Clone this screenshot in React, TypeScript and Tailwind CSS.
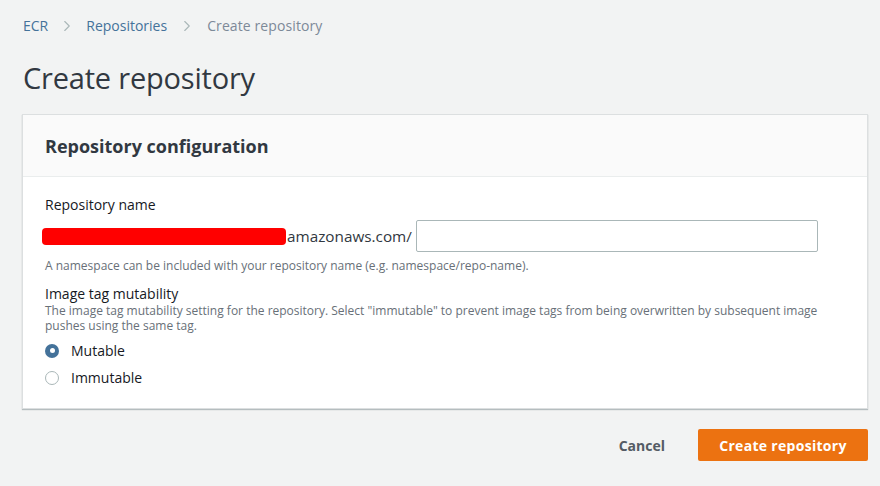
import { ChevronRight } from 'lucide-react'

const font = { fontFamily: '"Open Sans", "Noto Sans", Arial, sans-serif' }

export default function App() {
  return (
    <div className="w-[880px] h-[486px] bg-[#f2f3f3] text-[#16191f] overflow-hidden" style={font}>
      {/* Breadcrumbs */}
      <div className="flex items-center pl-[23px] pt-[14px] h-[24px] text-[14px] leading-[20px] box-content">
        <span className="text-[#44729a]">ECR</span>
        <ChevronRight className="w-[18px] h-[18px] mx-[10px] text-[#aab7b8]" strokeWidth={1.5} />
        <span className="text-[#44729a]">Repositories</span>
        <ChevronRight className="w-[18px] h-[18px] mx-[11px] text-[#aab7b8]" strokeWidth={1.5} />
        <span className="text-[#7d8998] tracking-[0.1px]">Create repository</span>
      </div>

      {/* Title */}
      <h1 className="pl-[23px] mt-[22px] text-[29px] leading-[36px] text-[#313841] tracking-[-0.2px]">
        Create repository
      </h1>

      {/* Card */}
      <div className="ml-[22px] mr-[12px] mt-[18px] bg-white border border-[#dcdfe0] shadow-[0_1px_1px_rgba(0,28,36,0.25)]">
        <div className="bg-[#fafafa] border-b border-[#eaeded] h-[62px] flex items-center px-[22px]">
          <h2 className="text-[18px] font-bold text-[#313841] leading-[24px]">Repository configuration</h2>
        </div>
        <div className="px-[22px] pt-[18px] pb-[21px]">
          <div className="text-[14px] leading-[20px] text-[#16191f]">Repository name</div>
          <div className="flex items-center mt-[5px]">
            <div className="w-[244px] h-[17px] rounded-[4px] bg-[#ff0000] -ml-[3px]" />
            <span className="text-[15.3px] text-[#313841] ml-[1px]">amazonaws.com/</span>
            <input
              className="ml-[4px] w-[402px] h-[32px] border border-[#aab7b8] rounded-[2px] bg-white outline-none"
              aria-label="Repository name"
            />
          </div>
          <p className="mt-[6px] text-[12px] leading-[16px] text-[#687078]">
            A namespace can be included with your repository name (e.g. namespace/repo-name).
          </p>

          <div className="mt-[11px] text-[14px] leading-[18px] text-[#16191f]">Image tag mutability</div>
          <p className="text-[12px] leading-[15px] text-[#687078] pr-[2px]">
            The image tag mutability setting for the repository. Select "immutable" to prevent image tags from being overwritten by subsequent image pushes using the same tag.
          </p>
          <div className="mt-[8px] flex flex-col gap-[8px]">
            <label className="flex items-center gap-[12px] text-[14px] leading-[19px]">
              <span className="w-[14px] h-[14px] rounded-full bg-[#44729a] flex items-center justify-center">
                <span className="w-[5px] h-[5px] rounded-full bg-white" />
              </span>
              Mutable
            </label>
            <label className="flex items-center gap-[12px] text-[14px] leading-[19px]">
              <span className="w-[14px] h-[14px] rounded-full border border-[#aab7b8] bg-white" />
              Immutable
            </label>
          </div>
        </div>
      </div>

      {/* Actions */}
      <div className="flex justify-end items-center mt-[20px] pr-[12px] gap-[33px]">
        <button className="text-[14px] font-bold text-[#545b64]">Cancel</button>
        <button className="w-[170px] h-[32px] bg-[#ec7211] rounded-[2px] text-white text-[14px] font-bold tracking-[0.3px]">
          Create repository
        </button>
      </div>
    </div>
  )
}
